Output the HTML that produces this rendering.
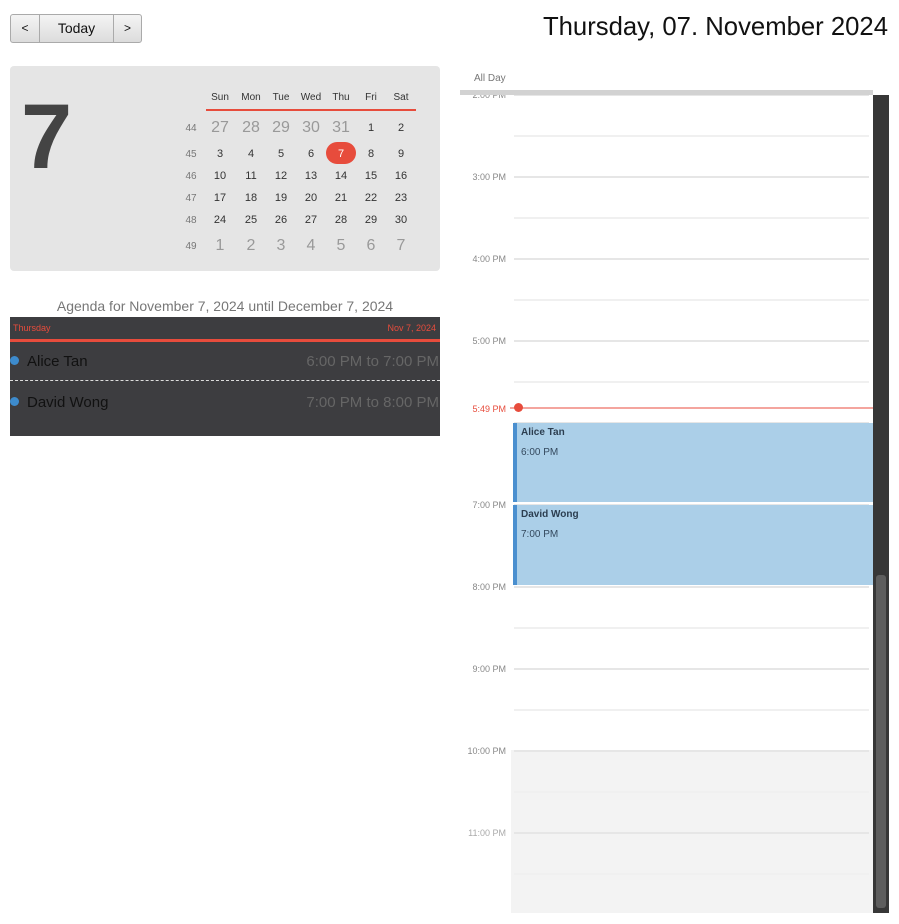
<!DOCTYPE html><html><head><style>
*{margin:0;padding:0;box-sizing:border-box}
body{width:899px;height:924px;background:#fff;font-family:"Liberation Sans",sans-serif;position:relative;overflow:hidden}
.a{position:absolute}
.btn{position:absolute;top:14px;height:29px;border:1px solid #aaa;background:linear-gradient(#f4f4f4,#dcdcdc);font-size:14px;color:#111;text-align:center;line-height:27px}
.c{position:absolute;width:30px;text-align:center;color:#333;font-size:11px}
.o{color:#999;font-size:16px}
.w{position:absolute;left:181px;width:20px;text-align:center;font-size:10px;color:#777}
.hl{position:absolute;left:514px;width:355px;height:2px;background:#e6e6e6}
.hh{position:absolute;left:514px;width:355px;height:2px;background:#f0f0f0}
.lb{position:absolute;left:450px;width:56px;text-align:right;font-size:9px;color:#888}
</style></head><body>
<div class="btn" style="left:10px;width:30px;border-radius:3px 0 0 3px;font-size:12px">&lt;</div>
<div class="btn" style="left:39px;width:75px">Today</div>
<div class="btn" style="left:113px;width:29px;border-radius:0 3px 3px 0;font-size:12px">&gt;</div>
<div class="a" style="right:11px;top:13px;font-size:25.7px;color:#111">Thursday, 07. November 2024</div>

<div class="a" style="left:10px;top:66px;width:430px;height:205px;background:#e5e5e5;border-radius:4px"></div>
<div class="a" style="left:21px;top:85px;font-size:92px;font-weight:bold;color:#444;line-height:104px">7</div>
<div class="a" style="left:206px;top:109px;width:210px;height:2px;background:#e74c3c"></div>
<div id="cal"></div>

<div class="a" style="left:10px;top:298px;width:430px;text-align:center;font-size:14px;color:#777">Agenda for November 7, 2024 until December 7, 2024</div>
<div class="a" style="left:10px;top:317px;width:430px;height:119px;background:#3d3d40"></div>
<div class="a" style="left:13px;top:323px;font-size:9px;color:#e74c3c">Thursday</div>
<div class="a" style="right:463px;top:323px;font-size:9px;color:#e74c3c">Nov 7, 2024</div>
<div class="a" style="left:10px;top:339px;width:430px;height:3px;background:#e74c3c"></div>
<div class="a" style="left:10px;top:356px;width:9px;height:9px;border-radius:50%;background:#3d8bcd"></div>
<div class="a" style="left:27px;top:353px;font-size:15px;color:#111">Alice Tan</div>
<div class="a" style="right:460px;top:353px;font-size:15px;color:#666">6:00 PM to 7:00 PM</div>
<div class="a" style="left:10px;top:380px;width:430px;border-top:1px dashed #ddd"></div>
<div class="a" style="left:10px;top:397px;width:9px;height:9px;border-radius:50%;background:#3d8bcd"></div>
<div class="a" style="left:27px;top:394px;font-size:15px;color:#111">David Wong</div>
<div class="a" style="right:460px;top:394px;font-size:15px;color:#666">7:00 PM to 8:00 PM</div>

<div class="a" style="left:474px;top:73px;font-size:10px;color:#777">All Day</div>
<div class="a" style="left:511px;top:750px;width:362px;height:163px;background:#f3f3f3"></div>
<div id="grid"></div>
<div class="a" style="left:460px;top:90px;width:413px;height:5px;background:#d2d2d2"></div>
<div class="a" style="left:873px;top:95px;width:16px;height:818px;background:#373737"></div>
<div class="a" style="left:876px;top:575px;width:10px;height:333px;background:#5e5e5e;border-radius:3px"></div>
<div class="lb" style="top:404px;color:#e74c3c">5:49 PM</div>
<div class="a" style="left:510px;top:407px;width:363px;height:2px;background:#f4a59e"></div>
<div class="a" style="left:514px;top:403px;width:9px;height:9px;border-radius:50%;background:#e74c3c"></div>
<div class="a" style="left:513px;top:423px;width:360px;height:79px;background:#abcfe8;border-left:4px solid #4a8fcf"></div>
<div class="a" style="left:521px;top:427px;font-size:10px;font-weight:bold;color:#2c3e50">Alice Tan</div>
<div class="a" style="left:521px;top:447px;font-size:10px;color:#34495e">6:00 PM</div>
<div class="a" style="left:513px;top:505px;width:360px;height:80px;background:#abcfe8;border-left:4px solid #4a8fcf"></div>
<div class="a" style="left:521px;top:509px;font-size:10px;font-weight:bold;color:#2c3e50">David Wong</div>
<div class="a" style="left:521px;top:529px;font-size:10px;color:#34495e">7:00 PM</div>
<script>
var h='',xs=[220,251,281,311,341,371,401],d=['Sun','Mon','Tue','Wed','Thu','Fri','Sat'];
d.forEach(function(t,i){h+='<div class="c" style="left:'+(xs[i]-15)+'px;top:92px;font-size:10px;color:#333">'+t+'</div>'});
var rows=[[44,127,[27,28,29,30,31,1,2],5],[45,153,[3,4,5,6,7,8,9],0],[46,175,[10,11,12,13,14,15,16],0],[47,197,[17,18,19,20,21,22,23],0],[48,219,[24,25,26,27,28,29,30],0],[49,245,[1,2,3,4,5,6,7],7]];
rows.forEach(function(r){h+='<div class="w" style="top:'+(r[1]-4)+'px">'+r[0]+'</div>';
r[2].forEach(function(n,i){var o=(r[3]==5&&i<5)||r[3]==7;var s='left:'+(xs[i]-15)+'px;top:'+(r[1]-(o?8:5))+'px';
if(r[0]==45&&n==7)h+='<div class="a" style="left:326px;top:142px;width:30px;height:22px;border-radius:11px;background:#e74c3c"></div><div class="c" style="'+s+';color:#fff">7</div>';
else h+='<div class="c'+(o?' o':'')+'" style="'+s+'">'+n+'</div>';})});
document.getElementById('cal').innerHTML=h;
var g='',L=['2:00 PM','3:00 PM','4:00 PM','5:00 PM','6:00 PM','7:00 PM','8:00 PM','9:00 PM','10:00 PM','11:00 PM'];
for(var i=0;i<10;i++){var y=95+82*i;g+='<div class="hl" style="top:'+(y-1)+'px"></div><div class="hh" style="top:'+(y+40)+'px"></div>';
if(i!=4)g+='<div class="lb" style="top:'+(y-5)+'px'+(i==9?';color:#aaa':'')+'">'+L[i]+'</div>';}
document.getElementById('grid').innerHTML=g;
</script>
</body></html>
